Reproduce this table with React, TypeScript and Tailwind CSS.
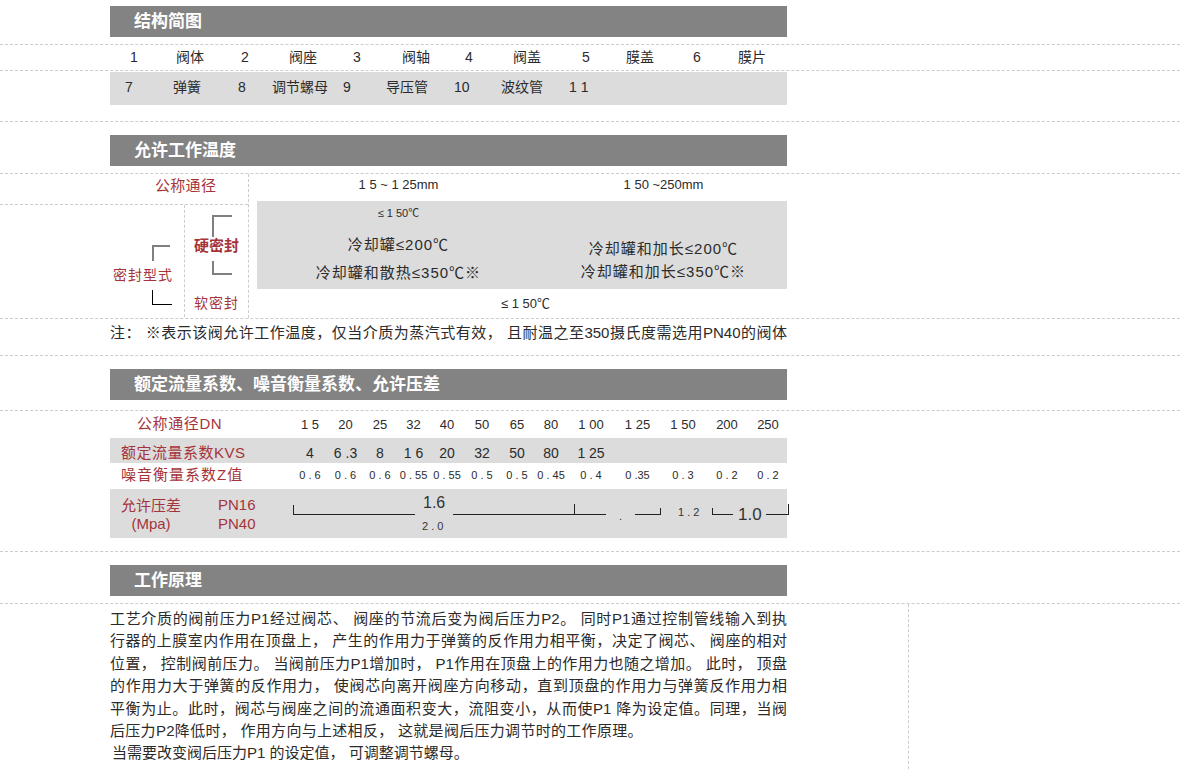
import React from 'react';

const RED = 'text-[#a5343a]';
const DN_COLS = 'grid grid-cols-[182px_36px_35px_34px_33px_34px_36px_34px_34px_46px_47px_44px_44px_38px]';

function Dash() {
  return <div className="border-t border-dashed border-[#cccccc]" />;
}

function Header({ title }: { title: string }) {
  return (
    <div className="ml-[110px] flex h-[31px] w-[677px] items-center bg-[#838383] pl-[24px] text-[17px] font-bold text-white">
      {title}
    </div>
  );
}

const parts1: [string, string][] = [
  ['1', 'w-[46px]'],
  ['阀体', 'w-[65px]'],
  ['2', 'w-[48px]'],
  ['阀座', 'w-[64px]'],
  ['3', 'w-[49px]'],
  ['阀轴', 'w-[63px]'],
  ['4', 'w-[48px]'],
  ['阀盖', 'w-[69px]'],
  ['5', 'w-[44px]'],
  ['膜盖', 'w-[67px]'],
  ['6', 'w-[45px]'],
  ['膜片', 'w-[40px]'],
];

const parts2: [string, string][] = [
  ['7', 'w-[48px]'],
  ['弹簧', 'w-[65px]'],
  ['8', 'w-[34px]'],
  ['调节螺母', 'w-[71px]'],
  ['9', 'w-[43px]'],
  ['导压管', 'w-[68px]'],
  ['10', 'w-[47px]'],
  ['波纹管', 'w-[68px]'],
  ['1 1', 'w-[40px]'],
];

const dn = ['1 5', '20', '25', '32', '40', '50', '65', '80', '1 00', '1 25', '1 50', '200', '250'];
const kvs = ['4', '6 .3', '8', '1 6', '20', '32', '50', '80', '1 25', '', '', '', ''];
const zval = ['0 . 6', '0 . 6', '0 . 6', '0 . 55', '0 . 55', '0 . 5', '0 . 5', '0 . 45', '0 . 4', '0 .35', '0 . 3', '0 . 2', '0 . 2'];

const justified = [
  '工艺介质的阀前压力P1经过阀芯、 阀座的节流后变为阀后压力P2。 同时P1通过控制管线输入到执',
  '行器的上膜室内作用在顶盘上， 产生的作用力于弹簧的反作用力相平衡，决定了阀芯、 阀座的相对',
  '位置， 控制阀前压力。 当阀前压力P1增加时， P1作用在顶盘上的作用力也随之增加。 此时， 顶盘',
  '的作用力大于弹簧的反作用力， 使阀芯向离开阀座方向移动，直到顶盘的作用力与弹簧反作用力相',
  '平衡为止。此时，阀芯与阀座之间的流通面积变大，流阻变小，从而使P1 降为设定值。同理，当阀',
];

function PressureLines() {
  return (
    <svg width="497" height="49" viewBox="0 0 497 49" className="overflow-visible" shapeRendering="crispEdges">
      <g stroke="#222" strokeWidth="1" fill="none">
        <path d="M1.5 16 V25.5 H123" />
        <path d="M161 25.5 H314" />
        <path d="M282.5 15 V25.5" />
        <path d="M343 25.5 H368.5 V19" />
        <path d="M420.5 19 V25.5 H441" />
        <path d="M474 25.5 H496.5 V15" />
      </g>
      <g fill="#333" fontFamily="Liberation Sans, sans-serif">
        <text x="131" y="19" fontSize="16">1.6</text>
        <text x="130" y="41" fontSize="11">2 . 0</text>
        <text x="327" y="31" fontSize="11">.</text>
        <text x="386" y="27" fontSize="11">1 . 2</text>
        <text x="446" y="31" fontSize="17">1.0</text>
      </g>
    </svg>
  );
}

export default function App() {
  return (
    <div className="min-h-[770px] w-[1180px] bg-white pt-[6px] font-['Liberation_Sans','Noto_Sans_CJK_SC',sans-serif] text-[#2b2b2b]">
      {/* 结构简图 */}
      <Header title="结构简图" />
      <div className="h-[7px]" />
      <Dash />
      <div className="ml-[130px] flex h-[25px] items-center text-[14px]">
        {parts1.map(([t, w], i) => (
          <div key={i} className={`${w} whitespace-nowrap`}>
            {t}
          </div>
        ))}
      </div>
      <Dash />
      <div className="h-[1px]" />
      <div className="ml-[110px] flex h-[33px] w-[677px] bg-[#dcdcdc] pl-[15px] pt-[7px] text-[14px] leading-[16px]">
        {parts2.map(([t, w], i) => (
          <div key={i} className={`${w} whitespace-nowrap`}>
            {t}
          </div>
        ))}
      </div>
      <div className="h-[16px]" />
      <Dash />
      <div className="h-[13px]" />

      {/* 允许工作温度 */}
      <Header title="允许工作温度" />
      <div className="h-[7px]" />
      <div className="flex border-y border-dashed border-[#cccccc]">
        <div className="w-[249px] shrink-0 border-r border-dashed border-[#cccccc]">
          <div className={`h-[31px] border-b border-dashed border-[#cccccc] pl-[155px] pt-[3px] text-[15px] leading-[18px] tracking-[0.3px] ${RED}`}>
            公称通径
          </div>
          <div className="flex h-[112px]">
            <div className="flex w-[185px] flex-col border-r border-dashed border-[#cccccc]">
              <div className="ml-[152px] mt-[40px] h-[16px] w-[18px] border-l-2 border-t-2 border-[#808080]" />
              <div className={`ml-[113px] mt-[4px] h-[20px] whitespace-nowrap text-[14px] leading-[20px] tracking-[1px] ${RED}`}>
                密封型式
              </div>
              <div className="ml-[152px] mt-[5px] h-[15px] w-[20px] border-b border-l border-black" />
            </div>
            <div className="flex flex-1 flex-col">
              <div className="ml-[27px] mt-[10px] h-[22px] w-[20px] border-l-2 border-t-2 border-[#808080]" />
              <div className={`ml-[9px] h-[18px] whitespace-nowrap text-[15px] font-bold leading-[18px] ${RED}`}>硬密封</div>
              <div className="ml-[27px] mt-[6px] h-[14px] w-[20px] border-b-2 border-l-2 border-[#808080]" />
              <div className={`ml-[9px] mt-[19px] h-[18px] whitespace-nowrap text-[14px] leading-[18px] tracking-[1px] ${RED}`}>
                软密封
              </div>
            </div>
          </div>
        </div>
        <div className="w-[538px] shrink-0">
          <div className="grid h-[27px] grid-cols-[283px_247px] pl-[8px] pt-[3px] text-[13px] leading-[16px]">
            <div className="text-center">1 5 ~ 1 25mm</div>
            <div className="text-center">1 50 ~250mm</div>
          </div>
          <div className="ml-[8px] grid h-[88px] w-[530px] grid-cols-[283px_247px] bg-[#dcdcdc]">
            <div className="flex flex-col items-center pt-[4px]">
              <div className="text-[11px] leading-[16px]">≤ 1 50℃</div>
              <div className="mt-[14px] text-[15px] leading-[20px] tracking-[1px]">冷却罐≤200℃</div>
              <div className="mt-[8px] text-[15px] leading-[20px] tracking-[1px]">冷却罐和散热≤350℃※</div>
            </div>
            <div className="flex flex-col items-center pt-[38px]">
              <div className="text-[15px] leading-[20px] tracking-[1px]">冷却罐和加长≤200℃</div>
              <div className="mt-[3px] text-[15px] leading-[20px] tracking-[1px]">冷却罐和加长≤350℃※</div>
            </div>
          </div>
          <div className="h-[29px] pl-[252px] pt-[6px] text-[13px] leading-[18px]">≤ 1 50℃</div>
        </div>
      </div>
      <div className="h-[36px] pt-[5px]">
        <p className="ml-[110px] w-[677px] text-justify text-[15px] leading-[18px] [text-align-last:justify]">
          注： ※表示该阀允许工作温度，仅当介质为蒸汽式有效， 且耐温之至350摄氏度需选用PN40的阀体
        </p>
      </div>
      <Dash />
      <div className="h-[13px]" />

      {/* 额定流量系数 */}
      <Header title="额定流量系数、噪音衡量系数、允许压差" />
      <div className="h-[10px]" />
      <Dash />
      <div className="ml-[110px] w-[677px]">
        <div className={`${DN_COLS} h-[27px] items-center text-[13px]`}>
          <div className={`whitespace-nowrap pl-[27px] text-[15px] tracking-[0.6px] ${RED}`}>公称通径DN</div>
          {dn.map((v, i) => (
            <div key={i} className="whitespace-nowrap text-center">
              {v}
            </div>
          ))}
        </div>
        <div className={`${DN_COLS} h-[25px] bg-[#dcdcdc] pt-[6px] text-[14px] leading-[18px]`}>
          <div className={`whitespace-nowrap pl-[11px] text-[15px] tracking-[0.5px] ${RED}`}>额定流量系数KVS</div>
          {kvs.map((v, i) => (
            <div key={i} className="whitespace-nowrap text-center">
              {v}
            </div>
          ))}
        </div>
        <div className={`${DN_COLS} h-[25px] items-center text-[11px]`}>
          <div className={`whitespace-nowrap pl-[11px] text-[15px] tracking-[1px] ${RED}`}>噪音衡量系数Z值</div>
          {zval.map((v, i) => (
            <div key={i} className="whitespace-nowrap text-center">
              {v}
            </div>
          ))}
        </div>
        <div className="h-[1px]" />
        <div className="flex h-[49px] bg-[#dcdcdc]">
          <div className={`flex w-[182px] shrink-0 pl-[11px] text-[15px] ${RED}`}>
            <div className="flex w-[60px] flex-col items-center pt-[8px] leading-[18px]">
              <div className="whitespace-nowrap">允许压差</div>
              <div className="whitespace-nowrap">(Mpa)</div>
            </div>
            <div className="ml-[37px] flex flex-col pt-[6px] leading-[19px]">
              <div>PN16</div>
              <div>PN40</div>
            </div>
          </div>
          <PressureLines />
        </div>
      </div>
      <div className="h-[13px]" />
      <Dash />
      <div className="h-[13px]" />

      {/* 工作原理 */}
      <Header title="工作原理" />
      <div className="h-[7px]" />
      <Dash />
      <div className="flex h-[170px]">
        <div className="w-[110px] shrink-0" />
        <div className="w-[677px] shrink-0 pt-[4px] text-[15px] leading-[22.4px]">
          {justified.map((l, i) => (
            <p key={i} className="text-justify [text-align-last:justify]">
              {l}
            </p>
          ))}
          <p className="tracking-[0.3px]">后压力P2降低时， 作用方向与上述相反， 这就是阀后压力调节时的工作原理。</p>
          <p className="ml-[2px]">当需要改变阀后压力P1 的设定值， 可调整调节螺母。</p>
        </div>
        <div className="w-[121px] shrink-0" />
        <div className="flex-1 border-l border-dashed border-[#cccccc]" />
      </div>
    </div>
  );
}
